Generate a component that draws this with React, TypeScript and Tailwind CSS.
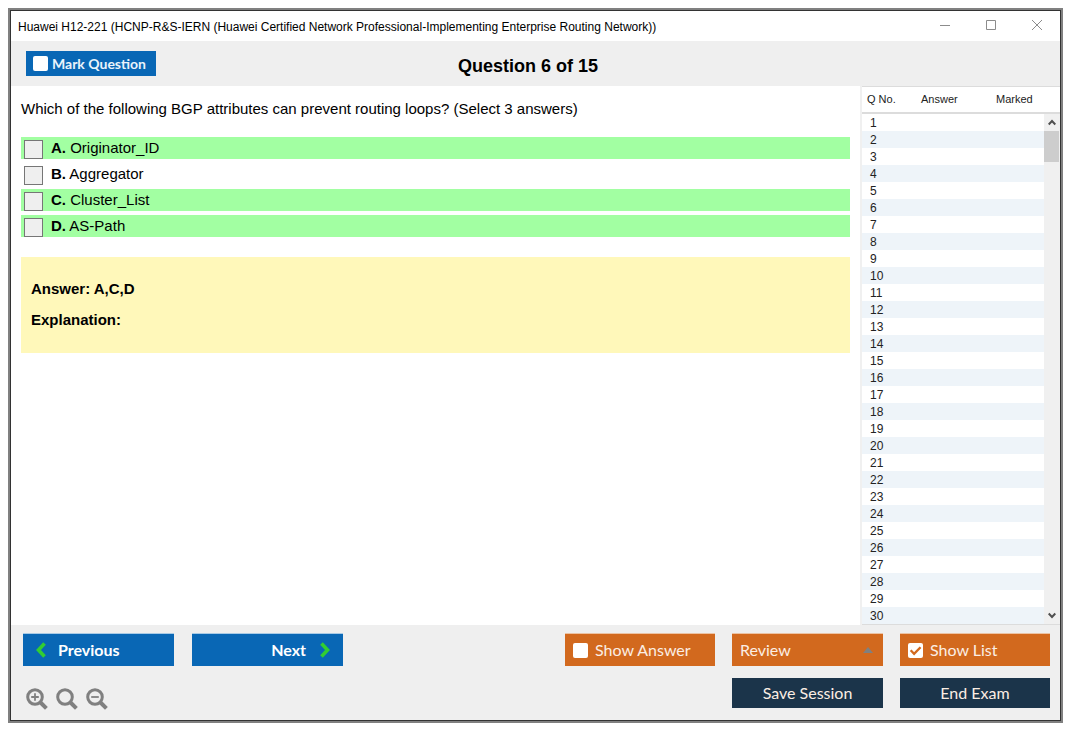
import { useState } from "react";
import type { ReactNode } from "react";

const options = [
  { key: "A", text: "Originator_ID", correct: true },
  { key: "B", text: "Aggregator", correct: false },
  { key: "C", text: "Cluster_List", correct: true },
  { key: "D", text: "AS-Path", correct: true },
];

const questions = Array.from({ length: 30 }, (_, i) => i + 1);

const tools = [
  { label: "Zoom in", sign: "M9 5.2v7.6M5.2 9h7.6" },
  { label: "Reset zoom", sign: "" },
  { label: "Zoom out", sign: "M5.2 9h7.6" },
];

function TitleBar() {
  return (
    <div className="flex h-[30px] shrink-0 items-center justify-between bg-white pr-[17px] pl-[7px]">
      <h1 className="pt-0.5 text-[12px] whitespace-nowrap">
        Huawei H12-221 (HCNP-R&amp;S-IERN (Huawei Certified Network Professional-Implementing Enterprise Routing
        Network))
      </h1>
      <div className="flex gap-[34px] text-[#8c8c8c]">
        <button aria-label="Minimize">
          <svg width="12" height="12" viewBox="0 0 12 12" stroke="currentColor">
            <path d="M1 5.5h10" />
          </svg>
        </button>
        <button aria-label="Maximize">
          <svg width="12" height="12" viewBox="0 0 12 12" fill="none" stroke="currentColor">
            <path d="M1.5.5h9v9h-9z" />
          </svg>
        </button>
        <button aria-label="Close">
          <svg width="12" height="12" viewBox="0 0 12 12" stroke="currentColor">
            <path d="M1 0l10 10M11 0L1 10" />
          </svg>
        </button>
      </div>
    </div>
  );
}

function CheckButton({
  checked,
  onChange,
  className,
  children,
}: {
  checked: boolean;
  onChange: (value: boolean) => void;
  className: string;
  children: ReactNode;
}) {
  return (
    <label className={`flex items-center ${className}`}>
      <span className="grid place-items-center">
        <input
          type="checkbox"
          checked={checked}
          onChange={(e) => onChange(e.target.checked)}
          className="col-start-1 row-start-1 size-[15px] appearance-none rounded-xs bg-white"
        />
        {checked && (
          <svg
            viewBox="0 0 14 14"
            fill="none"
            stroke="#d2691e"
            strokeWidth="2.2"
            className="pointer-events-none col-start-1 row-start-1 size-[15px]"
          >
            <path d="M2.5 6.8l3.2 3.2 6-6" />
          </svg>
        )}
      </span>
      {children}
    </label>
  );
}

function Chevron({ d }: { d: string }) {
  return (
    <svg width="10" height="16" viewBox="0 0 10 16" fill="none" stroke="#32cd32" strokeWidth="3.6">
      <path d={d} />
    </svg>
  );
}

function QuestionList() {
  return (
    <aside className="flex w-[200px] shrink-0 flex-col border-l-2 border-[#f0f0f0] text-[#222]">
      <div className="flex min-h-0 flex-1 border-y border-[#dcdcdc]">
        <table className="w-full table-fixed border-collapse self-start text-left">
          <colgroup>
            <col className="w-[54px]" />
            <col className="w-[75px]" />
            <col />
          </colgroup>
          <thead>
            <tr className="h-[26px] border-b-2 border-[#dcdcdc] text-[11px]">
              <th className="p-0 pl-[5px] font-normal">Q No.</th>
              <th className="p-0 pl-[5px] font-normal">Answer</th>
              <th className="p-0 pl-[5px] font-normal">Marked</th>
            </tr>
          </thead>
          <tbody className="text-[12px] leading-[15px]">
            {questions.map((n) => (
              <tr key={n} className="h-[17px] even:bg-[#eef4f9]">
                <td className="p-0 pt-0.5 pl-2">{n}</td>
                <td className="p-0" />
                <td className="p-0" />
              </tr>
            ))}
          </tbody>
        </table>
        <div className="flex w-[16px] shrink-0 flex-col">
          <div className="h-[27px] shrink-0 border-b-2 border-[#dcdcdc]" />
          <div className="flex flex-1 flex-col items-center bg-[#f0f0f0] pr-px text-[#505050]">
            <button aria-label="Scroll up" className="flex h-[17px] items-center">
              <svg width="8" height="7" viewBox="0 0 8 7" fill="none" stroke="currentColor" strokeWidth="2">
                <path d="M.7 5.5L4 2l3.3 3.5" />
              </svg>
            </button>
            <div className="h-[31px] w-full bg-[#cdcdcd]" />
            <button aria-label="Scroll down" className="mt-auto flex h-[17px] items-center">
              <svg width="8" height="7" viewBox="0 0 8 7" fill="none" stroke="currentColor" strokeWidth="2">
                <path d="M.7 1.5L4 5l3.3-3.5" />
              </svg>
            </button>
          </div>
        </div>
      </div>
    </aside>
  );
}

export default function App() {
  const [marked, setMarked] = useState(false);
  const [showAnswer, setShowAnswer] = useState(false);
  const [showList, setShowList] = useState(true);

  return (
    <div className="flex min-h-screen bg-white pt-2 pr-3 pb-3 pl-2 font-['Liberation_Sans',Arial,sans-serif] text-black">
      <div className="flex flex-1 border-2 border-[#808080]">
        <div className="flex min-w-0 flex-1 flex-col border border-[#333]">
          <TitleBar />

          <header className="grid h-[45px] shrink-0 grid-cols-[1fr_auto_1fr] items-center bg-[#efefef] pr-[30px] pl-[15px]">
            <CheckButton
              checked={marked}
              onChange={setMarked}
              className="h-[25px] w-[130px] gap-1 bg-[#0967b5] pl-[7px] font-['Lato',sans-serif] text-[14px] font-bold text-[#eaf3fb]"
            >
              Mark Question
            </CheckButton>
            <h2 className="pt-1.5 text-[18px] font-bold">Question 6 of 15</h2>
          </header>

          <div className="flex flex-1">
            <main className="min-w-0 flex-1 px-[10px] pt-[13px] text-[15px] leading-5">
              <p>Which of the following BGP attributes can prevent routing loops? (Select 3 answers)</p>

              <div className="mt-[18px] flex flex-col gap-1">
                {options.map((o) => (
                  <label
                    key={o.key}
                    className={`flex h-[22px] gap-2 pl-[3px] leading-[22px] ${o.correct ? "bg-[#a2ffa2]" : "bg-white"}`}
                  >
                    <input
                      type="checkbox"
                      className="size-[19px] appearance-none self-end border border-[#767676] bg-[#efefef] checked:bg-[#0967b5]"
                    />
                    <span>
                      <b>{o.key}.</b> {o.text}
                    </span>
                  </label>
                ))}
              </div>

              <div className="mt-5 flex h-24 flex-col gap-[11px] bg-[#fff8ba] px-[10px] pt-[22px] font-bold">
                <p>Answer: A,C,D</p>
                <p>Explanation:</p>
              </div>
            </main>
            {showList && <QuestionList />}
          </div>

          <footer className="flex h-[95px] shrink-0 justify-between bg-[#efefef] pt-2 pr-[10px] pl-[12px] font-['Lato',sans-serif] text-[16px]">
            <div className="flex flex-col gap-[22px]">
              <div className="flex gap-[18px] font-bold text-white">
                <button className="flex h-[33px] w-[151px] items-center gap-3 border-t border-[#a9cbe6] bg-[#0967b5] pl-[13px]">
                  <Chevron d="M8.5 1.5L2.5 8l6 6.5" />
                  Previous
                </button>
                <button className="flex h-[33px] w-[151px] items-center justify-end gap-[14px] border-t border-[#a9cbe6] bg-[#0967b5] pr-[13px]">
                  Next
                  <Chevron d="M1.5 1.5l6 6.5-6 6.5" />
                </button>
              </div>
              <div className="flex gap-2 pl-[3px]">
                {tools.map((t) => (
                  <button key={t.label} aria-label={t.label}>
                    <svg width="22" height="22" viewBox="0 0 22 22" fill="none" stroke="#808080">
                      <circle cx="9" cy="9" r="7.3" strokeWidth="3" />
                      <path d="M14 14l6.4 6.4" strokeWidth="4" />
                      <path d={t.sign} strokeWidth="1.8" />
                    </svg>
                  </button>
                ))}
              </div>
            </div>

            <div className="flex gap-[17px] text-[#fbeee4]">
              <CheckButton
                checked={showAnswer}
                onChange={setShowAnswer}
                className="h-[33px] w-[150px] gap-[7px] border-t border-[#ecc3a4] bg-[#d2691e] pl-2"
              >
                Show Answer
              </CheckButton>
              <div className="flex flex-col gap-3">
                <div className="grid h-[33px] w-[151px] items-center border-t border-[#ecc3a4] bg-[#d2691e]">
                  <select
                    aria-label="Review"
                    className="col-start-1 row-start-1 h-full w-full appearance-none bg-transparent pl-2"
                  >
                    <option>Review</option>
                  </select>
                  <svg
                    width="10"
                    height="6"
                    viewBox="0 0 10 6"
                    fill="#808080"
                    className="pointer-events-none col-start-1 row-start-1 mr-[10px] justify-self-end"
                  >
                    <path d="M0 6l5-6 5 6z" />
                  </svg>
                </div>
                <button className="h-[30px] w-[151px] bg-[#1b344a]">Save Session</button>
              </div>
              <div className="flex flex-col gap-3">
                <CheckButton
                  checked={showList}
                  onChange={setShowList}
                  className="h-[33px] w-[150px] gap-[7px] border-t border-[#ecc3a4] bg-[#d2691e] pl-2"
                >
                  Show List
                </CheckButton>
                <button className="h-[30px] w-[150px] bg-[#1b344a]">End Exam</button>
              </div>
            </div>
          </footer>
        </div>
      </div>
    </div>
  );
}
